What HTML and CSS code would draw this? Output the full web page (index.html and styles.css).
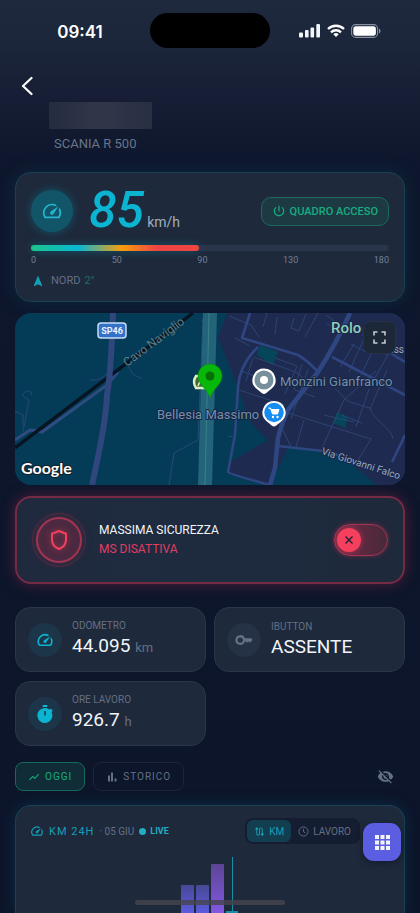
FILE: index.html
```html
<!DOCTYPE html>
<html lang="it">
<head>
<meta charset="utf-8">
<meta name="viewport" content="width=device-width, initial-scale=1">
<title>Scania R 500</title>
<link rel="stylesheet" href="styles.css">
</head>
<body>
<svg class="defs" aria-hidden="true">
  <symbol id="i-speed" viewBox="0 0 24 24"><path d="M20.38 8.57l-1.23 1.85a8 8 0 0 1-.22 7.58H5.07A8 8 0 0 1 15.58 6.85l1.85-1.23A10 10 0 0 0 3.35 19a2 2 0 0 0 1.72 1h13.85a2 2 0 0 0 1.74-1 10 10 0 0 0-.27-10.44zm-9.79 6.84a2 2 0 0 0 2.83 0l5.66-8.49-8.49 5.66a2 2 0 0 0 0 2.83z"/></symbol>
</svg>
<div class="screen">
  <div class="status">
    <span class="clock">09:41</span>
    <span class="island"></span>
    <div class="signals">
      <svg width="22" height="14" viewBox="0 0 22 14" fill="#fff"><rect x="0" y="8.500" width="4" height="5" rx="1"/><rect x="6" y="6" width="3.600" height="7.500" rx="1"/><rect x="11.500" y="3.500" width="3.600" height="10" rx="1"/><rect x="17.300" y="0" width="3.700" height="13.500" rx="1"/></svg>
      <svg width="18" height="14" viewBox="0 0 18 14" fill="none" stroke="#fff" stroke-width="2.400"><path d="M1 5a11.500 11.500 0 0 1 16 0M4 8.300a7.300 7.300 0 0 1 10 0"/><path d="M9 13L6.300 10.300a4 4 0 0 1 5.400 0z" fill="#fff" stroke="none"/></svg>
      <svg width="30" height="14" viewBox="0 0 30 14"><rect x=".6" y=".6" width="26" height="12.800" rx="4" fill="none" stroke="#8790a0" stroke-width="1.100"/><rect x="2.300" y="2.300" width="22.600" height="9.400" rx="2.600" fill="#fff"/><path d="M28 4.500c2 .8 2 4.200 0 5z" fill="#8790a0"/></svg>
    </div>
  </div>

  <header class="head">
    <button class="back" aria-label="Indietro"><svg width="12" height="20" viewBox="0 0 12 20" fill="none" stroke="#fff" stroke-width="2.200" stroke-linecap="round" stroke-linejoin="round"><path d="M10.500 2L2 10l8.500 8"/></svg></button>
    <div class="vehicle">
      <div class="plate"></div>
      <p class="model">SCANIA R 500</p>
    </div>
  </header>

  <main class="content">
    <section class="card speed">
      <div class="speed-top">
        <span class="gauge"><svg width="22" height="22"><use href="#i-speed"/></svg></span>
        <p class="reading"><b>85</b><span>km/h</span></p>
        <button class="ignition"><svg width="14" height="14" viewBox="0 0 24 24"><path d="M13 3h-2v10h2V3zm4.830 2.170l-1.420 1.420C17.990 7.860 19 9.810 19 12c0 3.870-3.130 7-7 7s-7-3.130-7-7c0-2.190 1.010-4.140 2.580-5.420L6.170 5.170C4.230 6.820 3 9.260 3 12c0 4.970 4.030 9 9 9s9-4.030 9-9c0-2.740-1.230-5.180-3.170-6.830z"/></svg>QUADRO ACCESO</button>
      </div>
      <div class="track"><div class="fill"></div></div>
      <div class="ticks"><span>0</span><span>50</span><span>90</span><span>130</span><span>180</span></div>
      <p class="heading"><svg width="12" height="12" viewBox="0 0 24 24"><path d="M12 1L3.500 21.500l.8.800L12 18.500l7.700 3.800.8-.8z"/></svg>NORD <em>2°</em></p>
    </section>

    <section class="map">
      <svg class="map-art" viewBox="0 0 390 172" preserveAspectRatio="xMidYMid slice">
        <rect width="390" height="172" fill="#043c57"/>
        <path d="M212 0L203 25 222 72 235 109 253 127 215 149 214 160 255 172 273 135 322 139 362 172H390V0z" fill="#1f2a50"/>
        <path d="M245 32l18 7-5 13-16-10zM322 99l11 5-3 11-12-5z" fill="#05465a"/>
        <g fill="none" stroke="#314b7c" stroke-width=".8">
          <path d="M75 67c8 1 12-2 17-6M102 62l4-9 5-2M113 53l5 8 9 5M16 82q2-4 -4-4q-6 2 -3 6l5 3-6 32M0 98l8 4v11M188 5l-5 122-24 13-5 32M200 3l-14 5"/>
          <path d="M214 3l22 9 8 12M220 25l15 8M252 0l-4 14M262 4l-2 17M279 5l-3 10 8 3 7-17M303 0l-13 24M312 10l14 12M311 2l19 14M325 54l14-23M334 59l18-40M345 64l21-43M357 70l17-30M336 31l15 8M347 22l25 20"/>
          <path d="M239 44l44 16 14 15M238 45l-7 23M227 58l22 9M224 77l46 15M260 45l22 8-12 28M287 51l-8 26M293 56l-17 50M280 77l20 7M270 99l86 27M289 107l-8 27M329 87l-22 48M320 76c8 5 8 10 15 13l20 6c3 12 22 20 23 31M329 87l32-29M354 76l-13 38M355 96l17-39M356 126l-16 26M309 102l30 7M327 102l20 8M263 107l14 29M213 123l5 1"/>
        </g>
        <path d="M188 0h14l-5 172h-14z" fill="#24647a"/>
        <path d="M194 0l-4 172" stroke="#3b8088" fill="none"/>
        <path d="M0 127l15-10q6 0 12 2L92 72l11-13" fill="none" stroke="#2e4c80" stroke-width="3"/>
        <path d="M0 135L178 0" stroke="#071422" stroke-width="3.400"/>
        <path d="M98 0Q96 60 92 82Q91 110 77 172" fill="none" stroke="#30477e" stroke-width="6"/>
        <g fill="none" stroke="#2e4681" stroke-width="2.600" stroke-linejoin="round">
          <path d="M235 0l-8 25 56 17q9 5 20 17M243 34q-18 17-20 40l-3 48-7 37q1 2 42 13M317 44l73 38M263 133l45 5 15 4M390 122l-13 27M372 38l18 11"/>
          <path d="M335 0q-14 31-32 59l-30 38q-6 12-10 28l-3 30-5 17" stroke-width="4.600"/>
        </g>
        <g class="road-sign"><rect x="83" y="10" width="28" height="15" rx="3"/><text x="97" y="21">SP46</text></g>
        <text class="m-road" transform="translate(112 54) rotate(-37)">Cavo Naviglio</text>
        <text class="m-street" transform="translate(306 141) rotate(18)">Via Giovanni Falco</text>
        <text class="m-town" x="316" y="20">Rolo</text>
        <text class="m-street" x="376" y="40">.ss</text>
        <text class="m-place" x="265" y="73">Monzini Gianfranco</text>
        <text class="m-place" x="142" y="106">Bellesia Massimo</text>
        <path d="M187 63h-6q-4 6 0 12h9z" fill="#3f6b34" stroke="#dff0c4" stroke-width="2.400"/>
        <path d="M186 66l-3 7" stroke="#dff0c4" stroke-width="1.500"/>
        <path d="M195 51a12 12 0 0 1 12 12c0 9-9 12-12 22c-3-10-12-13-12-22a12 12 0 0 1 12-12z" fill="#07b80b" stroke="#07900a" stroke-width=".6"/><circle cx="195" cy="63" r="4.500" fill="#067008"/>
        <path d="M249 55.500a11.500 11.500 0 0 1 8 19.800l-6 5q-2 1.500-4 0l-6-5a11.500 11.500 0 0 1 8-19.800z" fill="#fff"/><circle cx="249" cy="67" r="9.500" fill="#78909c"/><circle cx="249" cy="67" r="4" fill="#fff"/>
        <path d="M259 88a11.500 11.500 0 0 1 8 19.800l-6 5q-2 1.500-4 0l-6-5a11.500 11.500 0 0 1 8-19.800z" fill="#fff"/><circle cx="259" cy="99.500" r="9.700" fill="#148cf0"/>
        <path d="M253.500 95h2l2 6h5l1.500-4.500h-8" fill="#fff" stroke="#fff"/><circle cx="258" cy="104" r="1.200" fill="#fff"/><circle cx="262.500" cy="104" r="1.200" fill="#fff"/>
        <text class="m-logo" x="6" y="161">Google</text>
      </svg>
      <button class="expand" aria-label="Schermo intero"><svg width="13" height="13" viewBox="0 0 13 13" fill="none" stroke="#c3c9d2" stroke-width="1.600"><path d="M1 4.500V1h3.500M8.500 1H12v3.500M12 8.500V12H8.500M4.500 12H1V8.500"/></svg></button>
    </section>

    <section class="card security">
      <span class="shield"><svg width="18" height="22" viewBox="0 0 18 22" fill="none" stroke="#f43f5e" stroke-width="2" stroke-linejoin="round"><path d="M9 2l7 2.700v6c0 4-2.600 7.500-7 9.300-4.400-1.800-7-5.300-7-9.300v-6z"/></svg></span>
      <label class="security-text" for="ms"><span>MASSIMA SICUREZZA</span><span class="off">MS DISATTIVA</span></label>
      <span class="toggle"><input type="checkbox" id="ms"><svg class="cross" width="8" height="8" viewBox="0 0 8 8" stroke="#1c2030" stroke-width="1.400"><path d="M.5.5l7 7M7.500.5l-7 7"/></svg></span>
    </section>

    <section class="stats">
      <article class="card stat"><span class="dot"><svg width="18" height="18"><use href="#i-speed"/></svg></span><div><h2>ODOMETRO</h2><p>44.095 <small>km</small></p></div></article>
      <article class="card stat"><span class="dot muted"><svg width="18" height="18" viewBox="0 0 24 24"><path fill-rule="evenodd" d="M7 5.500a6.500 6.500 0 1 0 6.200 8.500h1.300l1.500 1.500 2-1.500 2 1.500 3.500-3.500-2-2.500h-8.300a6.500 6.500 0 0 0-6.200-4zm0 3a3.500 3.500 0 1 1 0 7 3.500 3.500 0 0 1 0-7z"/></svg></span><div><h2>IBUTTON</h2><p>ASSENTE</p></div></article>
      <article class="card stat"><span class="dot"><svg width="18" height="18" viewBox="0 0 24 24"><path fill-rule="evenodd" d="M9 0h6v2.500H9zM18.500 4.500l1.500 1.500 1.500-.5.500 3-1.500.5A10 10 0 1 1 12 4c2.300 0 4.300.8 6 2zM11 8v6h2V8z"/></svg></span><div><h2>ORE LAVORO</h2><p>926.7 <small>h</small></p></div></article>
    </section>

    <nav class="tabs">
      <button class="tab active"><svg width="12" height="12" viewBox="0 0 24 24"><path d="M3.500 18.490l6-6.010 4 4L22 6.920l-1.410-1.410-7.090 7.970-4-4L2 16.990z"/></svg>OGGI</button>
      <button class="tab"><svg width="12" height="12" viewBox="0 0 24 24"><path d="M4 9h4v12H4zM10 3h4v18h-4zM17 15h4v6h-4z"/></svg>STORICO</button>
      <button class="eye" aria-label="Nascondi"><svg width="17" height="17" viewBox="0 0 24 24"><path d="M12 7c2.760 0 5 2.240 5 5 0 .65-.13 1.260-.36 1.830l2.920 2.920c1.510-1.260 2.700-2.890 3.430-4.750-1.730-4.390-6-7.500-11-7.500-1.400 0-2.740.25-3.980.7l2.160 2.160C10.740 7.130 11.350 7 12 7zM2 4.270l2.280 2.280.46.46C3.080 8.300 1.780 10.020 1 12c1.730 4.390 6 7.500 11 7.500 1.550 0 3.030-.3 4.380-.84l.42.42L19.730 22 21 20.730 3.270 3 2 4.270zM7.530 9.800l1.550 1.550c-.05.21-.08.43-.08.65 0 1.660 1.340 3 3 3 .22 0 .44-.03.65-.08l1.550 1.550c-.67.33-1.410.53-2.200.53-2.760 0-5-2.240-5-5 0-.79.2-1.530.53-2.200zm4.310-.78l3.150 3.150.02-.16c0-1.660-1.340-3-3-3l-.17.01z"/></svg></button>
    </nav>

    <section class="card chart">
      <div class="chart-head">
        <svg width="14" height="14"><use href="#i-speed"/></svg>
        <h2>KM 24H</h2><span class="date">· 05 GIU</span><span class="live">LIVE</span>
        <div class="segment">
          <button class="seg on"><svg width="11" height="11" viewBox="0 0 24 24"><path d="M19 15.180V7c0-2.210-1.790-4-4-4s-4 1.790-4 4v10c0 1.100-.9 2-2 2s-2-.9-2-2V8.820C8.160 8.400 9 7.300 9 6c0-1.660-1.340-3-3-3S3 4.340 3 6c0 1.300.84 2.400 2 2.820V17c0 2.210 1.790 4 4 4s4-1.790 4-4V7c0-1.100.9-2 2-2s2 .9 2 2v8.180c-1.160.41-2 1.510-2 2.820 0 1.660 1.340 3 3 3s3-1.340 3-3c0-1.300-.84-2.400-2-2.820z"/></svg>KM</button>
          <button class="seg"><svg width="11" height="11" viewBox="0 0 24 24" class="clock-icon"><circle cx="12" cy="12" r="10"/><path d="M12 6v6.500l4 2.500"/></svg>LAVORO</button>
        </div>
      </div>
      <div class="plot">
        <i class="bar short"></i><i class="bar short"></i><i class="bar tall"></i><i class="now"></i>
      </div>
    </section>
  </main>

  <button class="fab" aria-label="Menu"><svg width="15" height="15" viewBox="0 0 15 15" fill="#fff"><path d="M0 0h4v4H0zM5.500 0h4v4h-4zM11 0h4v4h-4zM0 5.500h4v4H0zM5.500 5.500h4v4h-4zM11 5.500h4v4h-4zM0 11h4v4H0zM5.500 11h4v4h-4zM11 11h4v4h-4z"/></svg></button>
  <div class="home"></div>
</div>
</body>
</html>
```
FILE: styles.css
```css
:root {
  --cyan: #0bb5d2;
  --green: #17ad80;
  --red: #f43f5e;
  --muted: #647083;
  --card: #1e293b;
}
* { box-sizing: border-box; }
body { margin: 0; background: #0c152a; font-family: Roboto, "Liberation Sans", sans-serif; color: #f1f5f9; }
h2, p { margin: 0; font-weight: 400; }
button { font: inherit; color: inherit; border: 0; background: none; padding: 0; display: flex; align-items: center; justify-content: center; }
svg { flex: none; display: block; fill: currentColor; }
svg[fill="none"] { fill: none; }
.defs { position: absolute; width: 0; height: 0; }

.screen { position: relative; height: 100vh; overflow: hidden; display: flex; flex-direction: column; background: linear-gradient(#1f293d 0, #1b263a 48px, #171e35 90px, #0e172d 160px, #0c152a 100%); }

.status { display: grid; grid-template-columns: 1fr 120px 1fr; align-items: center; padding-top: 13px; }
.clock { font: 600 17px/20px Inter, sans-serif; color: #fff; justify-self: center; padding: 2px 0 0 10px; }
.island { height: 35px; border-radius: 18px; background: #000; }
.signals { display: flex; gap: 6px; align-items: center; justify-content: center; padding-right: 10px; }

.head { display: flex; align-items: flex-start; padding: 24px 15px 0 15px; height: 124px; }
.back { width: 24px; height: 28px; }
.vehicle { margin: 30px 0 0 10px; }
.plate { width: 103px; height: 27px; background: linear-gradient(90deg, #242c3f, #303548 40%, #303548 60%, #272f43); }
.model { font-size: 13px; line-height: 16px; margin: 7px 0 0 5px; color: #687589; }

.content { flex: 1; display: flex; flex-direction: column; padding: 0 15px; min-height: 0; }
.content > * { flex: none; }
.card { background: var(--card); border: 1px solid #2a3749; border-radius: 16px; }

.speed { padding: 13px 15px; border-color: #1a4151; box-shadow: 0 0 16px #0d3a4e88; }
.speed-top { display: flex; align-items: center; height: 50px; }
.gauge { width: 42px; height: 42px; border-radius: 50%; background: #125468; box-shadow: 0 0 10px #0e6d82aa; color: #22b5cd; display: grid; place-items: center; }
.reading { display: flex; align-items: baseline; margin-left: 16px; padding-top: 10px; line-height: 48px; }
.reading b { font-size: 50px; font-weight: 500; font-style: italic; color: var(--cyan); }
.reading span { font-size: 14px; color: #a2adbd; margin-left: 3px; }
.ignition { margin-left: auto; height: 29px; padding: 0 10px; gap: 4px; font-size: 11px; font-weight: 500; color: var(--green); border: 1px solid #1c6a5d; border-radius: 10px; background: #1d3a42; }
.track { height: 6px; margin-top: 9px; border-radius: 3px; background: #29354a; }
.fill { width: 47%; height: 6px; border-radius: 3px; background: linear-gradient(90deg, #1dc48c, #09b8d3 28%, #f59e0b 54%, #ef4444 75%); box-shadow: 0 0 8px #087d9499; }
.ticks { display: flex; justify-content: space-between; font-size: 9px; line-height: 10px; margin-top: 4px; color: #718096; }
.heading { display: flex; align-items: center; gap: 7px; margin: 9px 0 0 1px; font-size: 11px; line-height: 14px; color: var(--muted); }
.heading svg { color: #159eb7; }
.heading em { font-style: normal; color: #196e70; margin-left: -3px; }

.map { position: relative; margin-top: 11px; border-radius: 16px; overflow: hidden; }
.map-art { width: 100%; height: auto; }
.expand { position: absolute; top: 8px; right: 9px; width: 33px; height: 33px; border-radius: 8px; background: #1c2838; border: 1px solid #243147; }
.road-sign rect { fill: #3471c8; stroke: #c6dcf6; stroke-width: 1.5; }
.road-sign text { font-size: 9px; font-weight: 700; fill: #e9f2ff; text-anchor: middle; }
.map text { paint-order: stroke; stroke-linejoin: round; }
.m-road { font-size: 12px; fill: #5d7c83; }
.m-street { font-size: 10px; fill: #9aaac2; stroke: #1b2748; stroke-width: 2px; }
.m-town { font-size: 15px; font-weight: 500; fill: #8fceb9; stroke: #1b2748; stroke-width: 2px; }
.m-place { font-size: 13px; fill: #748eab; stroke: #152644; stroke-width: 2px; }
.m-logo { font-family: Lato, sans-serif; font-size: 16px; font-weight: 700; fill: #fff; stroke: #13202b; stroke-width: 2px; }

.security { margin-top: 11px; height: 88px; padding: 0 15px; display: flex; align-items: center; border: 2px solid #762b45; box-shadow: 0 0 14px #8b274888; background: linear-gradient(90deg, #202a3f, #1e2b3f 50%, #1e293b); }
.shield { width: 46px; height: 46px; margin-left: 4px; border-radius: 50%; border: 2px solid #a23450; outline: 1px solid #56293e; outline-offset: 3px; background: #4b2940; box-shadow: 0 0 8px #7a294788; display: grid; place-items: center; }
.shield svg { filter: drop-shadow(0 0 3px #f43f5e99); }
.security-text { margin-left: 17px; font-size: 12px; line-height: 19px; display: flex; flex-direction: column; }
.off { color: #e13d62; }
.toggle { margin-left: auto; position: relative; display: block; height: 32px; }
.toggle input { appearance: none; display: block; margin: 0; width: 54px; height: 32px; padding: 3px 2px; border: 1px solid #a43550; border-radius: 16px; background: linear-gradient(90deg, #702a43, #48293d); box-shadow: 0 0 5px #a9305288; }
.toggle input::before { content: ""; display: block; width: 24px; height: 24px; border-radius: 50%; background: var(--red); box-shadow: 0 0 6px #f43f5e88; }
.cross { position: absolute; left: 11px; top: 12px; pointer-events: none; }

.stats { margin-top: 23px; display: grid; grid-template-columns: 1fr 1fr; gap: 9px 8px; }
.stat { height: 65px; padding: 0 12px; display: flex; align-items: center; gap: 10px; border-radius: 15px; }
.dot { width: 34px; height: 34px; border-radius: 50%; background: #1c3549; color: var(--cyan); display: grid; place-items: center; }
.dot.muted { background: #253144; color: var(--muted); }
.stat h2 { font-size: 10px; line-height: 14px; color: var(--muted); }
.stat p { font-size: 19px; line-height: 26px; }
.stat small { font-size: 13px; color: var(--muted); }

.tabs { display: flex; gap: 8px; margin-top: 16px; align-items: center; }
.tab { height: 29px; padding: 0 12px; gap: 5px; border: 1px solid #1b263b; border-radius: 8px; font-size: 10px; letter-spacing: 1px; color: var(--muted); }
.tab.active { color: var(--green); background: #102d37; border-color: #166a5c; }
.eye { margin: 0 11px 0 auto; color: #627086; }

.content > .chart { flex: 1; min-height: 108px; margin-top: 14px; padding: 12px 14px 0; border-color: #1a4151; border-bottom: 0; border-radius: 16px 16px 0 0; box-shadow: 0 0 14px #0c405888; display: flex; flex-direction: column; }
.chart-head { display: flex; align-items: center; height: 26px; color: #159fb9; }
.chart-head h2 { font-size: 11px; letter-spacing: 1px; margin-left: 5px; }
.date { font-size: 10px; color: var(--muted); margin-left: 5px; }
.live { font-size: 9px; font-weight: 700; display: flex; align-items: center; gap: 4px; margin-left: 5px; color: #22adc2; }
.live::before { content: ""; width: 7px; height: 7px; border-radius: 50%; background: currentColor; }
.segment { margin: 0 30px 0 auto; display: flex; padding: 2px; border-radius: 8px; background: #141d31; }
.seg { height: 22px; padding: 0 7px; gap: 4px; border-radius: 6px; font-size: 10px; color: var(--muted); }
.seg.on { background: #123e50; color: #159fb9; }
.clock-icon { fill: none; stroke: currentColor; stroke-width: 2; }
.plot { flex: 1; margin-top: 13px; padding-left: 151px; display: flex; gap: 2px; align-items: flex-end; }
.bar { width: 13px; border-radius: 1px 1px 0 0; }
.short { height: 28px; background: linear-gradient(#484895, #5c5ce0); }
.tall { height: 49px; background: linear-gradient(#5c4595, #8358e0); }
.now { width: 12px; height: 56px; background: linear-gradient(#168ea5, #168ea5) center / 1px 100% no-repeat, linear-gradient(#168ea5, #168ea5) bottom / 100% 2px no-repeat; }

.fab { position: absolute; right: 19px; bottom: 52px; width: 38px; height: 38px; border-radius: 11px; background: #5b5ee0; box-shadow: 0 2px 6px #0b122899; }
.home { position: absolute; left: 50%; bottom: 8px; width: 150px; height: 5px; margin-left: -75px; border-radius: 3px; background: #46454dcc; }
```
